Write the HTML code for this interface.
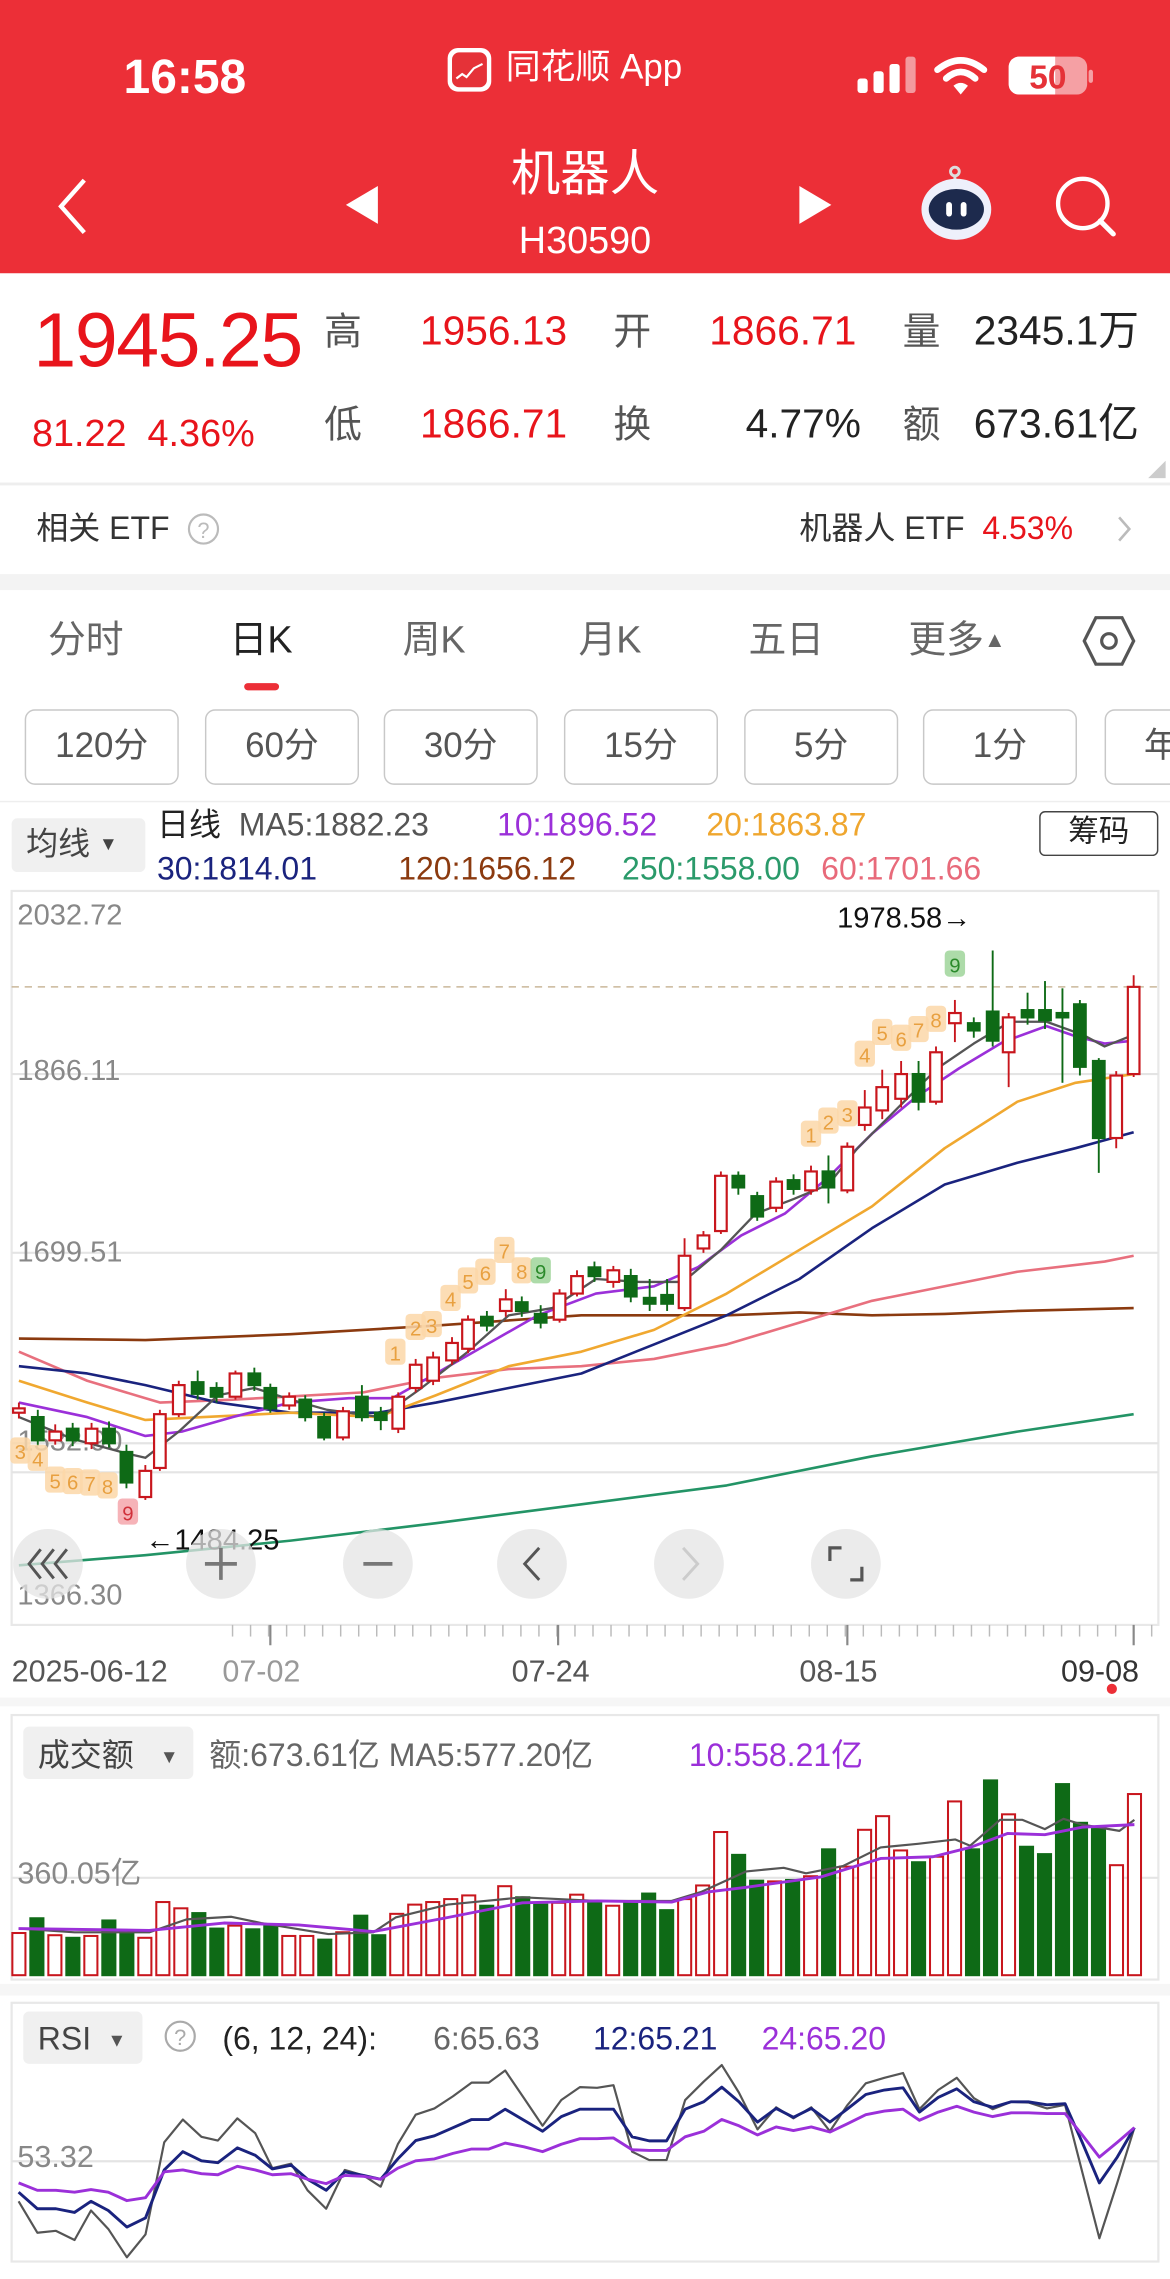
<!DOCTYPE html>
<html><head><meta charset="utf-8">
<style>
*{margin:0;padding:0;box-sizing:border-box}
html,body{width:1170px;height:2278px;overflow:hidden;background:#fff}
#r{position:absolute;left:0;top:0;width:805px;height:1568px;transform:scale(1.453416);transform-origin:0 0;font-family:"Liberation Sans","Noto Sans CJK SC",sans-serif;background:#fff}
.a{position:absolute;white-space:nowrap;line-height:1}
.btn{position:absolute;top:488px;height:52px;width:106px;border:1.5px solid #c8c8c8;border-radius:7px;font-size:24px;color:#555;text-align:center;line-height:50px}
</style></head><body>
<div id="r">
<div class="a" style="left:0;top:0;width:805px;height:188px;background:#ec2f37"></div>
<div class="a" style="left:85px;top:36px;font-size:33px;font-weight:bold;color:#fff">16:58</div>
<svg class="a" style="left:307px;top:32px" width="32" height="32" viewBox="0 0 32 32"><rect x="1" y="1" width="30" height="30" rx="7" fill="#fff"/><rect x="4" y="4" width="24" height="24" rx="5" fill="#e53238"/><path d="M7 22 L11 19 L14 21 L19 15 L25 12" stroke="#fff" stroke-width="1.5" fill="none"/></svg>
<div class="a" style="left:348px;top:35px;font-size:24px;color:#fff">同花顺 App</div>
<svg class="a" style="left:588px;top:36px" width="170" height="32"><rect x="2" y="18" width="7" height="10" rx="2" fill="#fff"/><rect x="13" y="13" width="7" height="15" rx="2" fill="#fff"/><rect x="24" y="8" width="7" height="20" rx="2" fill="#fff"/><rect x="35" y="3" width="7" height="25" rx="2" fill="#f39a9e"/><path d="M57 12 Q73 -1 89 12" stroke="#fff" stroke-width="4.5" fill="none" stroke-linecap="round"/><path d="M63 18 Q73 9 83 18" stroke="#fff" stroke-width="4.5" fill="none" stroke-linecap="round"/><path d="M68 23 L73 29 L78 23 Q73 19 68 23Z" fill="#fff"/><rect x="106" y="3" width="54" height="26" rx="7" fill="#f5a0a4"/><path d="M113 3 H138 V29 H113 A7 7 0 0 1 106 22 V10 A7 7 0 0 1 113 3Z" fill="#fff"/><text x="133" y="25" font-size="23" font-weight="bold" fill="#e53238" text-anchor="middle" font-family="Liberation Sans">50</text><rect x="161" y="12" width="3" height="9" rx="1.5" fill="#f5a0a4"/></svg>
<svg class="a" style="left:30px;top:118px" width="40" height="48"><path d="M28 6 L12 24 L28 42" stroke="#fff" stroke-width="3" fill="none"/></svg>
<svg class="a" style="left:234px;top:126px" width="30" height="30"><path d="M26 2 V28 L4 15Z" fill="#fff"/></svg>
<div class="a" style="left:0;width:805px;text-align:center;top:103px;font-size:34px;color:#fff">机器人</div>
<div class="a" style="left:0;width:805px;text-align:center;top:152px;font-size:26px;color:#fff">H30590</div>
<svg class="a" style="left:546px;top:126px" width="30" height="30"><path d="M4 2 V28 L26 15Z" fill="#fff"/></svg>
<svg class="a" style="left:628px;top:108px" width="60" height="62"><circle cx="29" cy="10" r="3" fill="none" stroke="#ddd" stroke-width="2"/><path d="M29 13 V18" stroke="#ddd" stroke-width="2"/><ellipse cx="30" cy="36" rx="24" ry="21" fill="#eef0fb"/><ellipse cx="30" cy="36" rx="19" ry="14" fill="#1d2a4d"/><rect x="23" y="31" width="4" height="10" rx="2" fill="#fff"/><rect x="33" y="31" width="4" height="10" rx="2" fill="#fff"/></svg>
<svg class="a" style="left:722px;top:118px" width="50" height="50"><circle cx="23" cy="22" r="17" stroke="#fff" stroke-width="3" fill="none"/><path d="M35 34 L44 43" stroke="#fff" stroke-width="3.5" stroke-linecap="round"/></svg>

<div class="a" style="left:23px;top:208px;font-size:53px;color:#e8141b;letter-spacing:-1px">1945.25</div>
<div class="a" style="left:22px;top:285px;font-size:26px;color:#e8141b">81.22&nbsp; 4.36%</div>
<div class="a" style="left:223px;top:215px;font-size:26px;color:#555">高</div>
<div class="a" style="left:289px;top:214px;font-size:28px;color:#e8141b">1956.13</div>
<div class="a" style="left:422px;top:215px;font-size:26px;color:#555">开</div>
<div class="a" style="left:488px;top:214px;font-size:28px;color:#e8141b">1866.71</div>
<div class="a" style="left:621px;top:215px;font-size:26px;color:#555">量</div>
<div class="a" style="left:670px;top:214px;font-size:28px;color:#222">2345.1万</div>
<div class="a" style="left:223px;top:279px;font-size:26px;color:#555">低</div>
<div class="a" style="left:289px;top:278px;font-size:28px;color:#e8141b">1866.71</div>
<div class="a" style="left:422px;top:279px;font-size:26px;color:#555">换</div>
<div class="a" style="left:513px;top:278px;font-size:28px;color:#222">4.77%</div>
<div class="a" style="left:621px;top:279px;font-size:26px;color:#555">额</div>
<div class="a" style="left:670px;top:278px;font-size:28px;color:#222">673.61亿</div>
<svg class="a" style="left:789px;top:316px" width="14" height="14"><path d="M13 1 V13 H1Z" fill="#ccc"/></svg>
<div class="a" style="left:0;top:332px;width:805px;height:2px;background:#eee"></div>
<div class="a" style="left:25px;top:353px;font-size:22px;color:#333">相关 ETF</div>
<svg class="a" style="left:128px;top:352px" width="24" height="24"><circle cx="12" cy="12" r="10" stroke="#bbb" stroke-width="1.5" fill="none"/><text x="12" y="18" font-size="15" fill="#bbb" text-anchor="middle" font-family="Liberation Sans">?</text></svg>
<div class="a" style="left:550px;top:353px;font-size:22px;color:#333">机器人 ETF <span style="color:#e8141b">&nbsp;4.53%</span></div>
<svg class="a" style="left:766px;top:352px" width="16" height="24"><path d="M4 4 L11 12 L4 20" stroke="#bbb" stroke-width="1.8" fill="none"/></svg>
<div class="a" style="left:0;top:395px;width:805px;height:11px;background:#f3f3f3"></div>

<div class="a" style="left:33px;top:427px;font-size:26px;color:#666">分时</div>
<div class="a" style="left:158px;top:427px;font-size:26px;color:#222">日K</div>
<div class="a" style="left:168px;top:470px;width:24px;height:5px;border-radius:3px;background:#ec2f37"></div>
<div class="a" style="left:277px;top:427px;font-size:26px;color:#666">周K</div>
<div class="a" style="left:398px;top:427px;font-size:26px;color:#666">月K</div>
<div class="a" style="left:515px;top:427px;font-size:26px;color:#666">五日</div>
<div class="a" style="left:625px;top:427px;font-size:26px;color:#666">更多<span style="font-size:15px;position:relative;top:-4px">▲</span></div>
<svg class="a" style="left:744px;top:421px" width="38" height="40"><path d="M10 4 H28 L36 20 L28 36 H10 L2 20Z" stroke="#555" stroke-width="2.2" fill="none"/><circle cx="19" cy="20" r="5" stroke="#555" stroke-width="2.2" fill="none"/></svg>

<div class="btn" style="left:17px">120分</div>
<div class="btn" style="left:141px">60分</div>
<div class="btn" style="left:264px">30分</div>
<div class="btn" style="left:388px">15分</div>
<div class="btn" style="left:512px">5分</div>
<div class="btn" style="left:635px">1分</div>
<div class="btn" style="left:760px;width:60px;text-align:left;padding-left:26px">年</div>
<div class="a" style="left:0;top:551px;width:805px;height:1px;background:#eee"></div>

<div class="a" style="left:8px;top:563px;width:92px;height:37px;background:#f0f0f0;border-radius:4px;font-size:22px;color:#444;padding:7px 0 0 10px">均线 <span style="font-size:13px;position:relative;top:-3px">▼</span></div>
<div class="a" style="left:108px;top:557px;font-size:22px;color:#222">日线 <span style="color:#555">&nbsp;MA5:1882.23</span></div>
<div class="a" style="left:342px;top:557px;font-size:22px;color:#9b30d9">10:1896.52</div>
<div class="a" style="left:486px;top:557px;font-size:22px;color:#efa62e">20:1863.87</div>
<div class="a" style="left:108px;top:587px;font-size:22px;color:#1a237e">30:1814.01</div>
<div class="a" style="left:274px;top:587px;font-size:22px;color:#8b3a0f">120:1656.12</div>
<div class="a" style="left:428px;top:587px;font-size:22px;color:#2a9a6a">250:1558.00</div>
<div class="a" style="left:565px;top:587px;font-size:22px;color:#e86a7a">60:1701.66</div>
<div class="a" style="left:715px;top:558px;width:82px;height:31px;border:1.5px solid #444;border-radius:4px;font-size:21px;color:#222;text-align:center;line-height:28px">筹码</div>

<svg class="a" id="main" style="left:0;top:0" width="805" height="1568"></svg>
</div>
<script>
var NS="http://www.w3.org/2000/svg",S=document.getElementById("main");
function el(t,a,txt){var e=document.createElementNS(NS,t);for(var k in a)e.setAttribute(k,a[k]);if(txt!=null)e.textContent=txt;S.appendChild(e);return e;}
function tx(x,y,s,c,t,o){var a={x:x,y:y,"font-size":s,fill:c,"font-family":"Liberation Sans, Noto Sans CJK SC, sans-serif"};if(o)for(var k in o)a[k]=o[k];return el("text",a,t);}
// frames
el("rect",{x:8,y:613,width:789,height:505,fill:"none",stroke:"#e8e8e8","stroke-width":1.5});
[739,862,993,1013].forEach(function(y){el("line",{x1:8,x2:797,y1:y,y2:y,stroke:"#e4e4e4","stroke-width":1.5});});
el("line",{x1:8,x2:797,y1:679,y2:679,stroke:"#c9b79a","stroke-width":1,"stroke-dasharray":"5,4"});
tx(12,636,20,"#888","2032.72");tx(12,743,20,"#888","1866.11");tx(12,868,20,"#888","1699.51");tx(12,998,20,"#888","1532.90");tx(12,1104,20,"#888","1366.30");
// MA lines
function pl(pts,c,w){el("polyline",{points:pts,fill:"none",stroke:c,"stroke-width":w||1.6,"stroke-linejoin":"round"});}
pl("13,1077 100,1070 200,1060 300,1048 400,1035 500,1022 600,1002 700,985 780,973","#239466",1.8);
pl("13,921 100,922 200,918 300,912 400,905 500,905 550,903 600,905 650,904 700,902 780,900","#8b3a0f",1.8);
pl("13,930 60,950 110,965 160,963 250,958 300,948 350,942 400,940 450,935 500,925 550,910 600,895 650,885 700,875 760,868 780,864","#e8707e",1.8);
pl("13,940 60,945 100,953 150,965 200,972 260,972 300,965 350,955 400,945 450,925 500,905 550,880 600,845 650,815 700,800 740,790 780,779","#1a237e",1.8);
pl("13,950 60,965 100,977 140,975 200,972 260,975 300,960 350,940 400,930 450,915 500,890 550,860 600,830 650,790 700,758 740,745 780,739","#f0a830",1.8);
pl("13,965 60,975 100,988 125,985 160,975 200,965 240,962 270,962 300,945 335,925 370,905 410,890 450,885 480,872 510,850 540,835 570,810 600,780 630,755 660,735 690,717 720,706 740,713 760,718 780,716","#9b30d9",1.8);
pl("13,975 50,990 87,1000 100,1003 123,985 150,960 175,955 200,963 225,970 262,975 290,955 322,930 350,905 380,900 410,880 440,882 470,882 496,860 520,835 546,825 570,815 590,790 620,760 645,735 670,718 695,703 720,703 745,712 760,720 780,712","#555",1.6);
// candles [x,y1,y2,hi,lo,type]
var C=[[13,969,972,965,976,'r'],[26,975,991,970,995,'g'],[38,985,991,980,994,'r'],[50,983,991,979,995,'g'],[63,983,993,979,997,'r'],[75,983,993,978,996,'g'],[87,999,1020,994,1024,'g'],[100,1012,1030,1008,1032,'r'],
[110,973,1010,970,1012,'r'],[123,953,973,950,975,'r'],[136,951,959,943,963,'g'],[149,955,961,951,965,'g'],[162,945,961,943,963,'r'],[175,945,953,941,957,'g'],[186,955,969,952,972,'g'],[199,961,967,958,970,'r'],[210,963,975,960,978,'g'],[223,975,989,972,991,'g'],[236,971,989,968,991,'r'],[249,961,975,953,978,'g'],[262,972,977,968,984,'g'],[274,961,983,958,986,'r'],[286,939,955,935,958,'r'],[298,934,950,930,953,'r'],[311,924,936,920,939,'r'],[322,908,928,905,931,'r'],[335,906,912,902,916,'g'],[348,894,902,887,906,'r'],[359,896,902,892,906,'g'],[372,904,910,898,914,'g'],[385,890,908,887,910,'r'],[397,878,890,874,892,'r'],[409,872,878,868,882,'g'],[422,874,882,871,886,'r'],[434,878,892,873,896,'g'],[447,893,897,880,902,'g'],[459,891,897,880,902,'g'],[471,864,900,852,902,'r'],[484,850,859,847,862,'r'],[496,809,847,806,849,'r'],[508,809,817,806,822,'g'],[521,823,837,820,840,'g'],[534,813,831,810,834,'r'],[546,812,818,808,822,'g'],[558,806,819,802,822,'r'],[570,806,817,795,828,'g'],[583,789,819,786,821,'r'],[595,762,774,750,778,'r'],[607,748,764,736,770,'r'],[620,739,756,730,762,'r'],[632,739,758,730,764,'g'],[644,724,758,720,760,'r'],[657,697,704,688,717,'r'],[670,704,709,700,714,'g'],[683,696,716,654,720,'g'],[694,700,724,697,748,'r'],[707,695,700,683,705,'g'],[719,695,702,675,708,'g'],[731,697,700,680,745,'g'],[743,691,734,688,740,'g'],[756,730,783,728,807,'g'],[768,740,783,737,790,'r'],[780,679,739,671,741,'r']];
C.forEach(function(c){var red=c[5]=='r',col=red?"#c8161d":"#0e6a16";
el("line",{x1:c[0],x2:c[0],y1:c[3],y2:c[4],stroke:col,"stroke-width":1.3});
el("rect",{x:c[0]-4,y:Math.min(c[1],c[2]),width:8,height:Math.max(2,Math.abs(c[2]-c[1])),fill:red?"#fff":col,stroke:col,"stroke-width":1.5});});
// TD labels
function td(x,y,t,k){var f=k=='g'?"#9fd59a":k=='p'?"#f4a6ac":"#fbd7a8",c=k=='g'?"#2b8a2b":k=='p'?"#d0303a":"#e8a040";
el("rect",{x:x-7,y:y-11,width:14,height:18,rx:3,fill:f,opacity:0.85});tx(x,y+4,14,c,t,{"text-anchor":"middle"});}
[[14,1000,'3'],[26,1005,'4'],[38,1020,'5'],[50,1021,'6'],[62,1022,'7'],[74,1024,'8']].forEach(function(a){td(a[0],a[1],a[2]);});
td(88,1042,'9','p');
[[272,932,'1'],[286,915,'2'],[297,913,'3'],[310,895,'4'],[322,883,'5'],[334,877,'6'],[347,862,'7'],[359,876,'8']].forEach(function(a){td(a[0],a[1],a[2]);});
td(372,876,'9','g');
[[558,782,'1'],[570,773,'2'],[583,768,'3'],[595,727,'4'],[607,712,'5'],[620,716,'6'],[632,710,'7'],[644,703,'8']].forEach(function(a){td(a[0],a[1],a[2]);});
td(657,665,'9','g');
tx(576,638,20,"#111","1978.58→");
tx(100,1066,20,"#111","←1484.25");
// nav circles
[33,152,260,366,474,582].forEach(function(x,i){el("circle",{cx:x,cy:1076,r:24,fill:"#e4e4e4",opacity:0.75});});
el("path",{d:"M28 1066 L20 1076 L28 1086 M37 1066 L29 1076 L37 1086 M46 1066 L38 1076 L46 1086",stroke:"#555","stroke-width":2,fill:"none"});
el("path",{d:"M141 1076 H163 M152 1065 V1087",stroke:"#777","stroke-width":2.5});
el("path",{d:"M250 1076 H270",stroke:"#777","stroke-width":2.5});
el("path",{d:"M371 1065 L361 1076 L371 1087",stroke:"#555","stroke-width":2,fill:"none"});
el("path",{d:"M470 1065 L480 1076 L470 1087",stroke:"#ccc","stroke-width":2,fill:"none"});
el("path",{d:"M571 1074 V1065 H579 M593 1078 V1087 H585",stroke:"#555","stroke-width":2.2,fill:"none"});
// date axis
for(var x=160;x<797;x+=12.4){el("line",{x1:x,x2:x,y1:1118,y2:1126,stroke:"#bbb","stroke-width":1});}
[186,384,583,780].forEach(function(x){el("line",{x1:x,x2:x,y1:1118,y2:1132,stroke:"#888","stroke-width":1.5});});
tx(8,1157,21,"#555","2025-06-12");tx(153,1157,21,"#999","07-02");tx(352,1157,21,"#555","07-24");tx(550,1157,21,"#555","08-15");tx(730,1157,21,"#333","09-08");
el("circle",{cx:765,cy:1162,r:3.5,fill:"#ec2f37"});
el("rect",{x:0,y:1168,width:805,height:6,fill:"#f6f6f6"});
// volume panel
el("rect",{x:8,y:1180,width:789,height:182,fill:"none",stroke:"#e8e8e8","stroke-width":1.5});
el("rect",{x:16,y:1188,width:117,height:36,rx:4,fill:"#f0f0f0"});
tx(26,1215,22,"#444","成交额");tx(110,1213,13,"#555","▼");
tx(144,1215,22,"#666","额:673.61亿  MA5:577.20亿");tx(474,1215,22,"#9b30d9","10:558.21亿");
el("line",{x1:8,x2:797,y1:1292,y2:1292,stroke:"#e4e4e4","stroke-width":1.5});
tx(12,1296,21,"#888","360.05亿");
var V=[[632,'r'],[592,'g'],[638,'r'],[645,'g'],[640,'r'],[598,'g'],[625,'g'],[645,'r'],[548,'r'],[565,'r'],[578,'g'],[620,'g'],[612,'r'],[622,'g'],[610,'g'],[640,'r'],[640,'r'],[650,'g'],[630,'r'],[585,'g'],[638,'g'],[580,'r'],[555,'r'],[548,'r'],[540,'r'],[530,'r'],[558,'g'],[505,'r'],[535,'g'],[555,'g'],[550,'r'],[528,'r'],[545,'g'],[558,'r'],[552,'g'],[525,'g'],[570,'g'],[540,'r'],[503,'r'],[358,'r'],[420,'g'],[490,'g'],[492,'r'],[488,'g'],[478,'r'],[405,'g'],[452,'r'],[352,'r'],[315,'r'],[408,'r'],[440,'g'],[425,'r'],[275,'r'],[405,'g'],[218,'g'],[310,'r'],[398,'g'],[418,'g'],[228,'g'],[333,'g'],[350,'g'],[448,'r'],[255,'r']];
V.forEach(function(v,i){var x=13+i*12.38,y=v[0]*0.2536+1169.7,red=v[1]=='r',col=red?"#c8161d":"#0e6a16";
el("rect",{x:x-4.5,y:y,width:9,height:1359-y,fill:red?"#fff":col,stroke:col,"stroke-width":1.4});});
function zl(a,c,w){var p=[];for(var i=0;i<a.length;i+=2)p.push((a[i]*0.5135).toFixed(1)+","+(a[i+1]*0.2536+1169.7).toFixed(1));pl(p.join(" "),c,w);}
zl([25,620,100,630,200,630,250,595,310,588,350,605,440,635,500,630,530,590,600,555,650,545,700,535,800,545,900,545,940,520,1000,465,1050,455,1080,470,1130,450,1180,400,1230,390,1280,378,1300,395,1340,325,1370,325,1400,350,1425,322,1450,338,1500,355,1520,325],"#555",1.5);
zl([25,620,200,625,300,605,400,610,500,628,600,590,700,550,800,545,900,548,950,520,1000,508,1100,480,1180,430,1250,425,1300,400,1350,362,1400,365,1450,345,1520,338],"#9b30d9",2);
el("rect",{x:0,y:1365,width:805,height:8,fill:"#f6f6f6"});
// RSI panel
el("rect",{x:8,y:1378,width:789,height:178,fill:"none",stroke:"#e8e8e8","stroke-width":1.5});
el("rect",{x:16,y:1384,width:82,height:36,rx:4,fill:"#f0f0f0"});
tx(26,1410,22,"#444","RSI");tx(74,1408,13,"#555","▼");
el("circle",{cx:124,cy:1401,r:10,fill:"none",stroke:"#aaa","stroke-width":1.5});tx(124,1407,15,"#aaa","?",{"text-anchor":"middle"});
tx(153,1410,22,"#222","(6, 12, 24):");tx(298,1410,22,"#666","6:65.63");tx(408,1410,22,"#1a237e","12:65.21");tx(524,1410,22,"#9b30d9","24:65.20");
el("line",{x1:8,x2:797,y1:1487,y2:1487,stroke:"#e4e4e4","stroke-width":1.5});
tx(12,1491,21,"#888","53.32");
var X=[25,50,75,100,122,145,170,195,220,245,270,292,318,342,365,390,412,437,462,487,510,533,557,582,607,632,655,677,702,727,752,777,800,822,847,870,893,918,943,967,990,1015,1040,1063,1087,1112,1135,1160,1185,1210,1232,1257,1282,1305,1330,1355,1378,1403,1427,1450,1473,1497,1520];
function rl(Y,c,w){var a=[];X.forEach(function(x,i){a.push(x,Y[i]);});zl(a,c,w);}
rl([1360,1445,1440,1465,1385,1435,1512,1450,1200,1138,1185,1195,1135,1175,1270,1258,1330,1380,1275,1290,1320,1205,1125,1108,1075,1038,1038,1005,1080,1155,1085,1050,1052,1045,1225,1248,1248,1085,1035,990,1065,1165,1105,1135,1105,1170,1100,1040,1025,1012,1110,1058,1025,1080,1110,1090,1092,1108,1098,1280,1460,1310,1160],"#555",1.5);
rl([1335,1380,1380,1390,1360,1385,1430,1405,1275,1225,1250,1255,1215,1235,1272,1262,1300,1330,1280,1290,1300,1245,1195,1182,1160,1138,1138,1110,1140,1170,1130,1110,1110,1110,1185,1196,1196,1110,1090,1050,1090,1145,1108,1132,1108,1145,1110,1070,1058,1052,1118,1078,1055,1090,1105,1090,1090,1098,1095,1200,1310,1240,1160],"#1a237e",2);
rl([1310,1330,1330,1335,1328,1335,1358,1350,1280,1275,1285,1288,1265,1275,1288,1285,1300,1312,1290,1292,1300,1270,1250,1245,1230,1218,1218,1202,1212,1225,1205,1190,1190,1188,1220,1222,1222,1185,1170,1138,1155,1180,1158,1168,1158,1172,1150,1125,1115,1110,1140,1118,1102,1118,1130,1120,1120,1122,1122,1180,1240,1200,1160],"#9b30d9",2);
</script>
</body></html>
